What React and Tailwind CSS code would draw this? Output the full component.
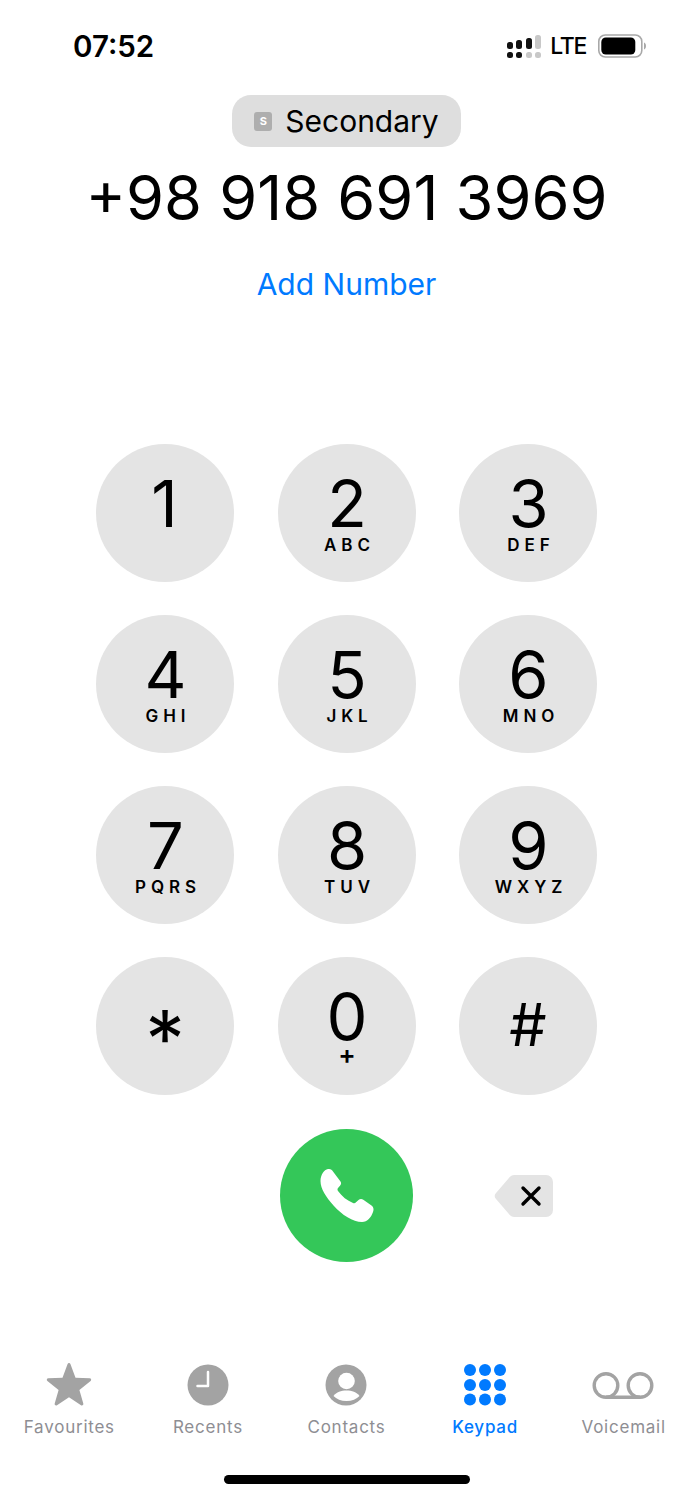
import React from "react";

const keys = [
  { n: "1", l: "" },
  { n: "2", l: "ABC" },
  { n: "3", l: "DEF" },
  { n: "4", l: "GHI" },
  { n: "5", l: "JKL" },
  { n: "6", l: "MNO" },
  { n: "7", l: "PQRS" },
  { n: "8", l: "TUV" },
  { n: "9", l: "WXYZ" },
];

const Key = ({ n, l }) => (
  <button className="w-[138px] h-[138px] rounded-full bg-[#e4e4e4] flex flex-col items-center text-black">
    <span className={`text-[65px] leading-[64px] font-normal mt-[28px] ${l ? "ml-[1px]" : "-ml-[1px]"}`}>{n}</span>
    {l && <span className="text-[17px] leading-[20px] font-semibold tracking-[0.29em] mt-[-1px] pl-[6px]">{l}</span>}
  </button>
);

const Signal = () => (
  <svg width="34" height="23" viewBox="0 0 34 23">
    <rect x="0" y="7" width="6" height="7" rx="2.500" fill="#111" />
    <rect x="0" y="17" width="6" height="6" rx="2.500" fill="#111" />
    <rect x="9" y="5" width="6" height="9" rx="2.500" fill="#111" />
    <rect x="9" y="17" width="6" height="6" rx="2.500" fill="#111" />
    <rect x="19" y="3" width="6" height="11" rx="2.500" fill="#111" />
    <rect x="19" y="17" width="6" height="6" rx="2.500" fill="#c8c8c8" />
    <rect x="28" y="0" width="6" height="14" rx="2.500" fill="#c8c8c8" />
    <rect x="28" y="17" width="6" height="6" rx="2.500" fill="#c8c8c8" />
  </svg>
);

const Battery = () => (
  <svg width="48" height="24" viewBox="0 0 48 24">
    <rect x="0.800" y="1" width="43" height="22" rx="6.500" fill="none" stroke="#a8a8a8" strokeWidth="1.600" />
    <rect x="3.300" y="3.500" width="34" height="17" rx="4.500" fill="#000" />
    <path d="M46 8.500c1.200.4 2 1.900 2 3.500s-.8 3.100-2 3.500z" fill="#a8a8a8" />
  </svg>
);

const Star = () => (
  <svg width="46" height="44" viewBox="0 1.500 46 44" className="overflow-visible">
    <path
      d="M23 1.500c.7 0 1.200.4 1.500 1.200l5 13.600 14.200.5c1.500.1 2 1.900.9 2.800L33.400 28.400l3.900 13.700c.4 1.400-1.100 2.500-2.300 1.700L23 35.800 11 43.800c-1.200.8-2.700-.3-2.300-1.700l3.900-13.700L1.400 19.600c-1.100-.9-.6-2.700.9-2.800l14.200-.5 5-13.600c.3-.8.8-1.200 1.500-1.200z"
      fill="#a3a3a3"
    />
  </svg>
);

const Clock = () => (
  <svg width="42" height="42" viewBox="0 0 42 42">
    <circle cx="21" cy="21" r="20.500" fill="#a3a3a3" />
    <path d="M21 8v14H10.500" fill="none" stroke="#fff" strokeWidth="2.500" strokeLinecap="round" strokeLinejoin="round" />
  </svg>
);

const Person = () => (
  <svg width="42" height="42" viewBox="0 0 42 42">
    <circle cx="21" cy="21" r="20.500" fill="#a3a3a3" />
    <circle cx="21.500" cy="17" r="8.300" fill="#fff" />
    <path d="M8.500 32c3-4 7.500-5.500 13-5.500s10 1.500 13 5.500c-3 3-7.500 5-13 5s-10-2-13-5z" fill="#fff" />
  </svg>
);

const Dots = () => (
  <svg width="42" height="42" viewBox="0 0 42 42" fill="#007aff">
    {[6, 21, 35.5].map((y) =>
      [6, 21, 36].map((x) => <circle key={`${x}-${y}`} cx={x} cy={y} r="6" />)
    )}
  </svg>
);

const Tape = () => (
  <svg width="62" height="27" viewBox="0 0 62 27" fill="none" stroke="#a3a3a3" strokeWidth="3.400" className="mr-[2px]">
    <circle cx="14" cy="13.500" r="11.800" />
    <circle cx="48" cy="13.500" r="11.800" />
    <path d="M14 25.300h34" />
  </svg>
);

const tabs = [
  { label: "Favourites", icon: <Star /> },
  { label: "Recents", icon: <Clock /> },
  { label: "Contacts", icon: <Person /> },
  { label: "Keypad", icon: <Dots />, active: true },
  { label: "Voicemail", icon: <Tape /> },
];

export default function App() {
  return (
    <div className="w-[693px] h-[1500px] bg-white flex flex-col items-center font-['Inter',sans-serif] text-black overflow-hidden">
      {/* status bar */}
      <div className="w-full h-[95px] flex justify-between pl-[73px] pr-[47px] pt-[27px]">
        <span className="text-[29.5px] leading-[38px] font-semibold">07:52</span>
        <div className="flex items-center h-[38px]">
          <Signal />
          <span className="text-[23px] leading-[30px] font-medium tracking-[-1.300px] ml-[9px] mr-[12px]">LTE</span>
          <Battery />
        </div>
      </div>

      <div className="w-[229px] h-[52px] rounded-[19px] bg-[#dedede] flex items-center justify-center gap-[13px]">
        <span className="w-[18px] h-[19px] rounded-[3px] bg-[#aeaeae] text-white text-[11px] leading-[19px] font-bold text-center">S</span>
        <span className="text-[30px] leading-[40px]">Secondary</span>
      </div>

      <h1 className="text-[61.300px] leading-[70px] font-normal mt-[16px] whitespace-nowrap">+98 918 691 3969</h1>
      <a className="text-[30px] leading-[40px] text-[#007aff] mt-[31px]">Add Number</a>

      {/* keypad */}
      <div className="grid grid-cols-3 gap-x-[43.500px] gap-y-[33px] mt-[140px]">
        {keys.map((k) => (
          <Key key={k.n} {...k} />
        ))}
        <button className="w-[138px] h-[138px] rounded-full bg-[#e4e4e4] flex justify-center text-[79px] leading-[64px] font-normal pt-[49px]">*</button>
        <button className="w-[138px] h-[138px] rounded-full bg-[#e4e4e4] flex flex-col items-center">
          <span className="text-[65px] leading-[64px] mt-[28px] ml-[1px]">0</span>
          <span className="text-[26px] leading-[26px] font-semibold mt-[-7px] ml-[1px]">+</span>
        </button>
        <button className="w-[138px] h-[138px] rounded-full bg-[#e4e4e4] flex justify-center text-[59px] leading-[64px] pt-[36px]">#</button>
      </div>

      {/* call row */}
      <div className="grid grid-cols-3 gap-x-[43px] mt-[34px] w-[500px] items-center justify-items-center">
        <div />
        <button className="w-[133px] h-[133px] rounded-full bg-[#34c759] flex items-center justify-center">
          <svg width="54" height="54" viewBox="0 0 54 54">
            <path
              d="M.5 12C.5 6 4 .5 8 0c2.500-.2 4 1 5 2.500l7.500 10c1 1.500.7 3-.5 4.300L18 19c-.8 1-.6 2 0 3 4 5.500 9 9.500 15 12 1.200.5 2.200.2 3-.8l2.500-2.200c1.500-1.200 3.300-1.200 4.800-.2l8.200 5.700c2 1.500 2.500 4 1.500 6.500-2 5.500-5.500 10-11 10-9 0-20-7-28.500-16.500C6 28 .5 20 .5 12z"
              fill="#fff"
            />
          </svg>
        </button>
        <svg width="60" height="44" viewBox="0 0 60 44" className="ml-[-8px]">
          <path d="M20 1h32a7 7 0 0 1 7 7v28a7 7 0 0 1-7 7H20a6 6 0 0 1-4-1.800L2 25c-1.800-1.800-1.800-4.200 0-6L16 2.800A6 6 0 0 1 20 1z" fill="#e4e4e4" />
          <path d="M29 14l16 16M45 14L29 30" stroke="#000" strokeWidth="3.400" strokeLinecap="round" fill="none" />
        </svg>
      </div>

      {/* tab bar */}
      <div className="grid grid-cols-5 w-full mt-[100px]">
        {tabs.map((t) => (
          <div key={t.label} className={`flex flex-col items-center ${t.active ? "text-[#007aff]" : "text-[#8e8e93]"}`}>
            <div className="h-[46px] flex items-center justify-center">{t.icon}</div>
            <span className={`text-[17px] leading-[22px] mt-[8px] tracking-[0.045em] ${t.active ? "font-medium" : ""}`}>{t.label}</span>
          </div>
        ))}
      </div>

      <div className="w-[246px] h-[9px] rounded-full bg-black mt-[37px]" />
    </div>
  );
}
